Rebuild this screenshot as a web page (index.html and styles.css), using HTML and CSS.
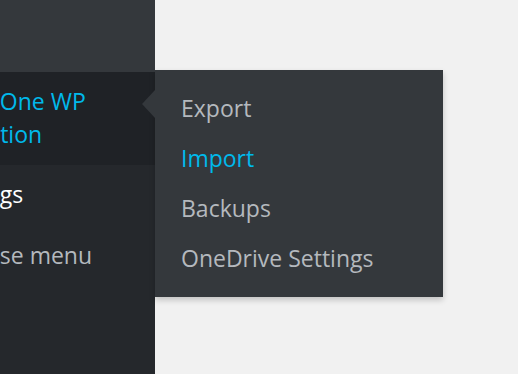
FILE: index.html
```html
<!DOCTYPE html>
<html lang="en">
<head>
    <meta charset="UTF-8">
    <title>Admin menu</title>
    <link rel="stylesheet" href="styles.css">
</head>
<body>
    <div class="sidebar">
        <div class="sidebar-top"></div>
        <div class="menu-item current">
            <span class="label">All-in-One WP Migration</span>
        </div>
        <div class="menu-item settings">
            <span class="label">Settings</span>
        </div>
        <div class="menu-item collapse">
            <span class="label">Collapse menu</span>
        </div>
    </div>
    <div class="main"></div>

    <ul class="flyout">
        <li>Export</li>
        <li class="active">Import</li>
        <li>Backups</li>
        <li>OneDrive Settings</li>
    </ul>
</body>
</html>
```

FILE: styles.css
```css
:root {
    --side-bg: #25282c;
    --side-top: #34383c;
    --hover-bg: #1f2226;
    --sub-bg: #34383c;
    --text: #b4b9be;
    --blue: #00b9eb;
}
* {
    margin: 0;
    padding: 0;
    box-sizing: border-box;
}
body {
    font-family: 'Open Sans', sans-serif;
    font-size: 23px;
    background-color: #f1f1f1;
    display: flex;
    height: 374px;
    overflow: hidden;
}
.sidebar {
    width: 155px;
    background-color: var(--side-bg);
    overflow: hidden;
    flex-shrink: 0;
}
.sidebar-top {
    height: 72px;
    background-color: var(--side-top);
}
.menu-item {
    padding: 13px 0 14px;
    line-height: 33px;
}
.menu-item .label {
    display: block;
    width: 230px;
    margin-left: -61px;
    color: var(--text);
}
.menu-item.current {
    background-color: var(--hover-bg);
}
.menu-item.current .label {
    color: var(--blue);
}
.menu-item.settings .label {
    margin-left: -62px;
    color: #fff;
}
.menu-item.collapse {
    padding-top: 14px;
}
.menu-item.collapse .label {
    margin-left: -67px;
}
.main {
    flex: 1;
}
.flyout {
    list-style: none;
    position: absolute;
    top: 70px;
    left: 155px;
    width: 288px;
    padding: 13px 0 14px;
    background-color: var(--sub-bg);
    box-shadow: 0 3px 6px rgba(0,0,0,0.2);
}
.flyout:before {
    content: "";
    position: absolute;
    top: 20px;
    left: -13px;
    border-top: 14px solid transparent;
    border-bottom: 14px solid transparent;
    border-right: 13px solid var(--sub-bg);
}
.flyout li {
    line-height: 50px;
    padding-left: 26px;
    color: var(--text);
}
.flyout li.active {
    color: var(--blue);
}
```
